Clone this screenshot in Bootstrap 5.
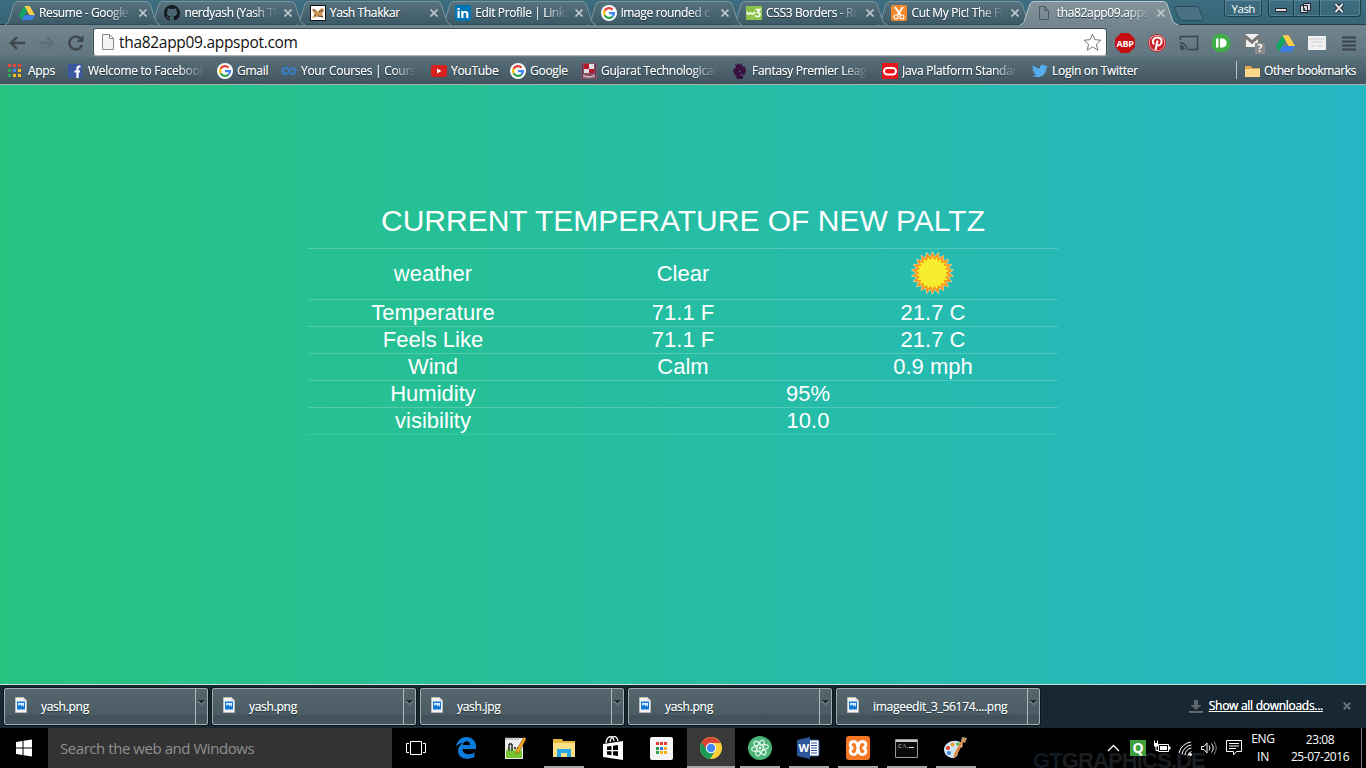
<!DOCTYPE html>
<html lang="en">
<head>
<meta charset="utf-8">
<title>tha82app09.appspot.com</title>
<link href="https://cdn.jsdelivr.net/npm/bootstrap@5.3.0/dist/css/bootstrap.min.css" rel="stylesheet">
<style>
html,body{height:768px;overflow:hidden}
body{width:1366px;font-family:"Open Sans","Noto Sans",sans-serif;font-size:12px;line-height:16px;color:#fff;letter-spacing:-.28px;background:#000}
svg{display:block;flex:none}
/* tab strip */
.strip{height:25px;background:linear-gradient(#3d6d80,#376578);border-bottom:1px solid #1d3f4d}
.tabs{padding-left:7px;height:25px}
.btab{width:153px;height:25px;margin-right:-7.6px;padding-left:12px;gap:4px}
.btab .shape{position:absolute;left:-2px;top:0;z-index:-1}
.btab .shape.on{left:-5px}
.btab .label{width:96px;padding-top:1px;letter-spacing:-.36px}
.btab .x{margin-left:-1px}
.fade-end{overflow:hidden;white-space:nowrap;-webkit-mask-image:linear-gradient(90deg,#000 calc(100% - 26px),transparent);mask-image:linear-gradient(90deg,#000 calc(100% - 26px),transparent)}
.label.fade-end{-webkit-mask-image:linear-gradient(90deg,#000 68px,transparent 93px);mask-image:linear-gradient(90deg,#000 68px,transparent 93px)}
.label,.bm span{text-shadow:0 1px 1px #1c3039,0 0 .6px #fff}
.newtab{margin:6px 0 0 3px}
.user{width:38px;height:17px;margin-left:19px;border:1px solid #1e4252;border-top:0;border-radius:0 0 4px 4px;box-shadow:inset 0 0 0 1px #5b8494;font-size:11.5px;line-height:17px;letter-spacing:-.5px}
.winctl{width:93px;height:17px;margin-left:6px;border:1px solid #1b3c4a;border-top:0;border-radius:0 0 4px 4px;box-shadow:inset 0 0 0 1px #57808f}
/* toolbar */
.tools{height:32px;background:linear-gradient(#73868f,#5f757f)}
.addr{width:1014px;height:28px;margin-top:3px;border:1px solid #3d4d54;border-bottom-color:#a9b6bc;border-radius:3px;background:#fff;box-shadow:0 0 0 1px #84959c66;color:#111;font-size:15.5px;letter-spacing:-.3px}
.url{padding-left:5px}
.ext{display:grid;grid-template-columns:repeat(8,32px);width:257px;justify-items:center;align-items:center}
.bms{height:28px;padding-left:8px;background:linear-gradient(#596f79,#40555f);border-bottom:1px solid #b3aeaa;display:grid;grid-template-columns:60px 149px 64px 150px 79px 71px 151px 150px 150px 204px 1fr;position:relative}
.bm{display:flex;align-items:center;gap:4px;height:27px}
.bm .fade-end{width:116px}
.bm .oth{letter-spacing:-.45px;margin-left:-1px}
/* page */
.page{height:599px;background:linear-gradient(90deg,#26c481,#25b7c4);font-family:"Liberation Sans",Arial,sans-serif;letter-spacing:0;padding-top:109px}
.wx{width:750px;margin:0 auto;color:#fff;font-size:22px;line-height:26px;text-align:center;border-collapse:collapse;table-layout:fixed}
.wx td,.wx th{padding:0;border-bottom:1px solid rgba(255,255,255,.2);font-weight:400;vertical-align:middle}
.wx th{font-size:30px;height:54px}
.wx tr:last-child td{border-color:rgba(255,255,255,.12)}
/* downloads */
.shelf{height:44px;background:#182832;border-top:1px solid #d4dcd6;padding:3px 0 0 4px;gap:4px}
.dl{width:204px;height:37px;border:1px solid #a3adb1;border-radius:2px;background:linear-gradient(#56666e,#4a5b63 75%,#3f5058 76%,#46575f);padding-left:10px;box-shadow:0 0 0 1px #0c181e;text-shadow:0 1px 1px #1c3039,0 0 .6px #fff}
.dl .arrow{width:12px;height:35px;border-left:1px solid #b0b9bd;padding:11px 0 0 2px}
.name{margin:10px 0 0 14px}
.showall{margin-right:15px}
.showall .all{margin:0 20px 0 6px;text-shadow:0 0 .6px #fff}
/* taskbar */
.taskbar{height:40px;background:#000}
.search{width:344px;height:40px;background:#333;color:#8f8f8f;font-size:15px;padding-left:12px;letter-spacing:-.45px}
.apps{display:grid;grid-template-columns:repeat(11,49px);margin-left:9px}
.app{height:40px;position:relative;display:flex;align-items:center;justify-content:center}
.app.run::after{content:"";position:absolute;left:5px;right:4px;bottom:0;height:2px;background:#aaa6a0}
.app.cur{background:#393939;margin:0 0 0 1px}
.app.cur::after{left:0;right:0}
.mark-bg{position:absolute;left:1033px;top:21px;height:19px;overflow:hidden;font:bold 22px/24px "Liberation Sans",sans-serif;color:#1b1e20;letter-spacing:-.9px}
.mark-bg span{color:#101b25}
.tray>*{flex:none;position:relative}
.lang{width:26px;line-height:18px;margin-left:-1px}
.clock{width:60px;margin-left:14px;line-height:17px;letter-spacing:-.45px}
.peek{width:5px;height:40px;margin-left:11px;border-left:1px solid #777}
</style>
</head>
<body>
<svg width="0" height="0" class="position-absolute">
<defs>
<linearGradient id="tg" x1="0" y1="0" x2="0" y2="1"><stop offset="0" stop-color="#587380"/><stop offset="1" stop-color="#3c5966"/></linearGradient>
<linearGradient id="ta" x1="0" y1="0" x2="0" y2="1"><stop offset="0" stop-color="#84939b"/><stop offset="1" stop-color="#73868f"/></linearGradient>
<symbol id="tab" viewBox="0 0 156 25"><path d="M0 24.5C3 24 3.500 22 4.500 19L9 4Q10 1.500 13 1.500H141Q144 1.500 145 4L150 19C151 22 152 24 155 24.500" fill="url(#tg)" stroke="#7d939c"/></symbol>
<symbol id="tabon" viewBox="0 0 159 25"><path d="M-1 25C4 24 4 22 5 19L10 4Q11 1.500 14 1.500H143Q146 1.500 147 4L152 19C153 22 154 24 159 25" fill="url(#ta)" stroke="#bcc6ca"/></symbol>
<symbol id="x" viewBox="0 0 10 10"><path d="M1.500 1.500l7 7m0-7l-7 7" stroke="#c3ccd0" stroke-width="1.700"/></symbol>
<symbol id="goog" viewBox="0 0 16 16"><circle cx="8" cy="8" r="8" fill="#fff"/><g fill="none" stroke-width="2.300"><path d="M11.600 4.600A5 5 0 0 0 3.600 5.800" stroke="#ea4335"/><path d="M3.600 5.800a5 5 0 0 0 0 4.400" stroke="#fbbc05"/><path d="M3.600 10.200a5 5 0 0 0 7.800 1.500" stroke="#34a853"/><path d="M11.400 11.700A4.800 4.800 0 0 0 13 8.100H8" stroke="#4285f4"/></g></symbol>
<symbol id="drive" viewBox="0 0 16 14"><path d="M5.300 0h5.400L16 9.200h-5.400z" fill="#ffcf48"/><path d="M5.300 0L0 9.200 2.700 14 8 4.700z" fill="#11a661"/><path d="M5.400 9.200H16L13.300 14H2.700z" fill="#3c7fe8"/></symbol>
<symbol id="img" viewBox="0 0 12 16"><path d="M.5.5h8l3 3v12H.5z" fill="#f4f4f4" stroke="#bbb"/><path d="M8.500.5v3h3" fill="#ccc"/><path d="M2 4.500h8v8H2z" fill="#0a78d4"/><path d="M3 6h6v4L7.500 8 6.500 9.500 5 7.500 3 9z" fill="#d5ecff"/></symbol>
<symbol id="dn" viewBox="0 0 7 5"><path d="M0 0h7L3.500 4z" fill="#222b30"/><path d="M.5 1.500l3 3 3-3" fill="none" stroke="#9aa5aa"/></symbol>
</defs></svg>

<header>
<div class="strip d-flex">
 <div class="tabs d-flex">
  <div class="btab d-flex align-items-center position-relative" style="z-index:8"><svg class="shape" width="156" height="25"><use href="#tab"/></svg><svg width="16" height="14"><use href="#drive"/></svg><span class="label fade-end">Resume - Google</span><svg class="x" width="10" height="10"><use href="#x"/></svg></div>
  <div class="btab d-flex align-items-center position-relative" style="z-index:7"><svg class="shape" width="156" height="25"><use href="#tab"/></svg><svg width="16" height="16" viewBox="0 0 16 16"><path d="M8 0C3.600 0 0 3.600 0 8c0 3.500 2.300 6.500 5.500 7.600.4.100.5-.2.5-.4v-1.500c-2.200.5-2.700-.9-2.700-.9-.4-.9-.9-1.200-.9-1.200-.7-.5.1-.5.1-.5.8.1 1.200.8 1.200.8.7 1.200 1.900.9 2.300.7.1-.5.3-.9.5-1.100-1.800-.2-3.600-.9-3.600-4 0-.9.3-1.600.8-2.100-.1-.2-.4-1 .1-2.100 0 0 .7-.2 2.200.8a7.700 7.700 0 0 1 4 0c1.500-1 2.200-.8 2.200-.8.4 1.100.2 1.900.1 2.100.5.6.8 1.300.8 2.100 0 3.100-1.900 3.700-3.700 3.900.3.300.6.800.6 1.500v2.300c0 .2.100.5.500.4A8 8 0 0 0 8 0z" fill="#15191c"/></svg><span class="label fade-end">nerdyash (Yash Th</span><svg class="x" width="10" height="10"><use href="#x"/></svg></div>
  <div class="btab d-flex align-items-center position-relative" style="z-index:6"><svg class="shape" width="156" height="25"><use href="#tab"/></svg><svg width="16" height="16"><path d="M.5.500h15v15H.5z" fill="#fff" stroke="#111"/><path d="M2 4l4 1 2 2 2-3 3-1 1 3-2 3 2 4-4-2-4 1-4 1 3-4-2-2z" fill="#c99550"/><path d="M3 4l3 2M8 11l5 1M9 7l4-2M4 9l2 2" stroke="#5d4830"/></svg><span class="label">Yash Thakkar</span><svg class="x" width="10" height="10"><use href="#x"/></svg></div>
  <div class="btab d-flex align-items-center position-relative" style="z-index:5"><svg class="shape" width="156" height="25"><use href="#tab"/></svg><svg width="16" height="16"><rect width="16" height="16" rx="1.500" fill="#0077b5"/><path d="M2.500 6h2.200v7H2.500zM2.500 3h2.200v2H2.500zM6.300 6h2.100v1c1-1.700 5-1.600 5 1.800V13h-2.200V9.300c0-2-2.700-1.800-2.700 0V13H6.300z" fill="#fff"/></svg><span class="label fade-end">Edit Profile | Linke</span><svg class="x" width="10" height="10"><use href="#x"/></svg></div>
  <div class="btab d-flex align-items-center position-relative" style="z-index:4"><svg class="shape" width="156" height="25"><use href="#tab"/></svg><svg width="16" height="16"><use href="#goog"/></svg><span class="label fade-end">image rounded c</span><svg class="x" width="10" height="10"><use href="#x"/></svg></div>
  <div class="btab d-flex align-items-center position-relative" style="z-index:3"><svg class="shape" width="156" height="25"><use href="#tab"/></svg><svg width="16" height="16"><rect y="1" width="16" height="14" fill="#8bc34a"/><path d="M1 6.500c0 3.500 3 3.500 3.500.5C5 10 8.500 9.500 8.500 6.500" fill="none" stroke="#fff" stroke-width="1.500"/><path d="M9.500 4.500h4.500l-2.500 3c4 0 3 4.500-.5 4-1 0-1.500-.5-2-1" fill="none" stroke="#fff" stroke-width="1.600"/></svg><span class="label fade-end">CSS3 Borders - Ro</span><svg class="x" width="10" height="10"><use href="#x"/></svg></div>
  <div class="btab d-flex align-items-center position-relative" style="z-index:2"><svg class="shape" width="156" height="25"><use href="#tab"/></svg><svg width="16" height="16"><rect width="16" height="16" rx="2" fill="#f0892b"/><path d="M4 2l5.500 8M12 2L6.500 10" stroke="#fff" stroke-width="1.800"/><g fill="none" stroke="#fff" stroke-width="1.200"><circle cx="5" cy="12" r="2"/><circle cx="11" cy="12" r="2"/></g></svg><span class="label fade-end">Cut My Pic! The Fr</span><svg class="x" width="10" height="10"><use href="#x"/></svg></div>
  <div class="btab d-flex align-items-center position-relative" style="z-index:9"><svg class="shape on" width="159" height="25"><use href="#tabon"/></svg><svg width="16" height="16"><path d="M2.500 1.500h5l4 4v9h-9zM7.500 1.500v4h4" fill="none" stroke="#4d585e"/></svg><span class="label fade-end">tha82app09.apps</span><svg class="x" width="10" height="10"><use href="#x"/></svg></div>
 </div>
 <svg class="newtab" width="32" height="15"><path d="M1.500 2Q1.500.5 3 .5H23q2 0 3 2l4 10q.5 2-1 2H9q-2 0-3-2z" fill="#4b7282" stroke="#274d5d"/></svg>
 <div class="user text-center">Yash</div>
 <svg class="winctl" viewBox="0 0 91 16" width="93" height="17"><path d="M24.500 0v16M50.500 0v16" stroke="#1b3c4a"/><path d="M25.500 0v15M51.500 0v15" stroke="#57808f"/><path d="M6.500 8.500h11v3h-11z" fill="#ddd" stroke="#223"/><path d="M34.500 3.500h7v7h-7zM31.500 5.500h7v7h-7z" fill="#ddd" stroke="#223"/><path d="M34 8h2v2h-2z" fill="#345"/><path d="M66.500 4l7 8m0-8l-7 8" stroke="#223" stroke-width="4"/><path d="M66.500 4l7 8m0-8l-7 8" stroke="#ddd" stroke-width="2"/></svg>
</div>
<div class="tools d-flex">
 <svg width="93" height="34" viewBox="0 0 93 34"><g fill="none" stroke-width="2.400"><path d="M25 18H11m6-6l-6 6 6 6" stroke="#3f484d"/><path d="M39 18h14m-6-6l6 6-6 6" stroke="#5d6e76"/><path d="M81 14a6.500 6.500 0 1 0 1 6" stroke="#3f484d"/></g><path d="M83.500 10v7h-7z" fill="#3f484d"/></svg>
 <div class="addr d-flex align-items-center"><svg class="ms-2" width="12" height="16"><path d="M.5.500h7l4 4v11H.5zM7.500.500v4h4" fill="#f4f4f4" stroke="#888"/></svg><span class="url">tha82app09.appspot.com</span><svg class="ms-auto me-1" width="19" height="19"><path d="M9.500 1l2.400 5.700 6 .5-4.500 4 1.400 6-5.300-3.200-5.300 3.200 1.400-6-4.500-4 6-.5z" fill="#fff" stroke="#777"/></svg></div>
 <div class="ext ms-auto pt-1">
  <svg width="20" height="20"><path d="M6 0h8l6 6v8l-6 6H6l-6-6V6z" fill="#c70d12"/><text x="1.500" y="13.500" fill="#fff" font-size="9" font-weight="700" textLength="17">ABP</text></svg>
  <svg width="18" height="18"><circle cx="9" cy="9" r="9" fill="#cb2027"/><circle cx="9" cy="9" r="8" fill="#eee"/><circle cx="9" cy="9" r="7.500" fill="#cb2027"/><path d="M6 10.500C3 6 6.500 3.500 9.500 3.500c4 0 5 4 3.300 6.500-1.500 2-4 1.700-4.300.5M9.500 6.500L7.500 16" fill="none" stroke="#fff" stroke-width="2"/></svg>
  <svg width="20" height="18"><path d="M1.500 6V2.500h17v13H9" fill="none" stroke="#39454b" stroke-width="1.500"/><path d="M1 8.500a8 8 0 0 1 7 7M1 11.500a5 5 0 0 1 4 4M1 14h2v2" fill="none" stroke="#39454b" stroke-width="1.500"/></svg>
  <svg width="20" height="20"><circle cx="10" cy="10" r="9.500" fill="#3fae49"/><path d="M5 5.500h2.500v9H5zM9 5.500h2.500c5.500 0 5.500 9 0 9H9z" fill="#fff"/></svg>
  <svg width="24" height="22"><path d="M2 2h18v13H2z" fill="#eee"/><path d="M2 15V2h2l7 6 7-6h2v13h-3V7l-6 5-6-5v8z" fill="#777"/><rect x="14" y="11" width="10" height="11" fill="#8b8b8b"/><text x="16.500" y="20" fill="#fff" font-size="10" font-weight="700">?</text></svg>
  <svg width="19" height="17"><use href="#drive"/></svg>
  <svg width="18" height="14"><path d="M0 0h18v14H0z" fill="#f1f1f1"/><path d="M1 3h16M3 6h12M3 10h4m2 0h5" stroke="#ccc"/></svg>
  <svg width="14" height="16"><path d="M0 2.500h14M0 6.500h14M0 10.500h14M0 14.500h14" stroke="#39444a" stroke-width="2"/></svg>
 </div>
</div>
<nav class="bms">
 <div class="bm"><svg width="16" height="16"><path d="M0 1h3v3H0zM5 1h3v3H5zM10 1h3v3h-3z" fill="#e8453c"/><path d="M0 6h3v3H0zM0 11h3v3H0z" fill="#2fab54"/><path d="M5 6h3v3H5z" fill="#4a8af4"/><path d="M10 6h3v3h-3zM10 11h3v3h-3zM5 11h3v3H5z" fill="#f9bd15"/></svg><span>Apps</span></div>
 <div class="bm"><svg width="16" height="16"><path d="M0 1h14v14H0z" fill="#3b57a0"/><path d="M12.500 3.500h-1.200c-1.200 0-1.800.6-1.800 1.800V15M6.500 8.500h5.500" fill="none" stroke="#fff" stroke-width="2.200"/></svg><span class="fade-end">Welcome to Facebook</span></div>
 <div class="bm"><svg width="16" height="16"><use href="#goog"/></svg><span>Gmail</span></div>
 <div class="bm"><svg width="16" height="16"><path d="M7.500 6C5 4 1.500 5 1.500 8s3.500 4 6 1.500L9 7c2-2.500 5.500-2 5.500 1S11.500 11.500 9.500 10" fill="none" stroke="#3b7dc0" stroke-width="2.400"/></svg><span class="fade-end">Your Courses | Course</span></div>
 <div class="bm"><svg width="16" height="16"><rect y="2" width="16" height="12" rx="2.500" fill="#d8201f"/><path d="M6 5.500v5L10.500 8z" fill="#fff"/></svg><span>YouTube</span></div>
 <div class="bm"><svg width="16" height="16"><use href="#goog"/></svg><span>Google</span></div>
 <div class="bm"><svg width="16" height="16"><path d="M0 0h16v16H0z" fill="#884e5c"/><path d="M3 1h10v9H3z" fill="#ddd"/><path d="M3 1h5v5H3zM8 6h5v4H8z" fill="#b5172b"/><path d="M1 12q7 4 14 0" fill="none" stroke="#ccb8c4" stroke-width="1.500"/><path d="M1.500 1v13M14.500 1v13" fill="none" stroke="#4b3a68"/></svg><span class="fade-end">Gujarat Technological</span></div>
 <div class="bm"><svg width="16" height="16"><path d="M4 4l-1-3 2 1 1-2 2 2 2-2v3l3 1 1 4-1 3-2 1v4H5l-1-3-2-2-1-4z" fill="#37113f"/><path d="M7 8l2 1M8 12l3 0" stroke="#695470"/></svg><span class="fade-end">Fantasy Premier League</span></div>
 <div class="bm"><svg width="16" height="16"><path d="M0 0h16v16H0z" fill="#e8151d"/><rect x="2" y="5" width="12" height="6.500" rx="3.200" fill="none" stroke="#fff" stroke-width="2"/></svg><span class="fade-end">Java Platform Standard</span></div>
 <div class="bm"><svg width="16" height="16"><path d="M16 3.500l-1.600 1.600C14.500 11 9 16.500 0 13c2 0 3.500-.4 4.700-1.400-1.500 0-2.600-1-3-2.300h1.400C1.500 8.800.500 7.400.500 6L2 6.300C.5 5.200.200 3.500 1.100 1.900 3 4 5 5.200 7.900 5.400 7.300 1.500 11 .8 13.300 2.900L15.500 2l-1.200 1.700z" fill="#55acee"/></svg><span>Login on Twitter</span><svg class="ms-auto me-3" width="9" height="8"><path d="M1 1l3 3-3 3M5 1l3 3-3 3" fill="none" stroke="#5a5f62"/></svg></div>
 <div class="bm"><svg width="4" height="24"><path d="M.5 2v18" stroke="#b8c2c6"/></svg><svg width="17" height="16"><path d="M1 3h6l1 2h8v9H1z" fill="#e3a94f"/><path d="M1 6h15v8H1z" fill="#fbd68d"/></svg><span class="oth text-nowrap">Other bookmarks</span></div>
</nav>
</header>

<main class="page">
<table class="wx">
<thead><tr><th colspan="3">CURRENT TEMPERATURE OF NEW PALTZ</th></tr></thead>
<tbody>
<tr style="height:51px"><td>weather</td><td>Clear</td><td><svg class="mx-auto" id="sun" width="44" height="46" viewBox="-21.500 -22 44 46"><polygon fill="#fff3d0"/><polygon fill="#f7941d"/><polygon fill="#f8ee30"/></svg></td></tr>
<tr><td>Temperature</td><td>71.1 F</td><td>21.7 C</td></tr>
<tr><td>Feels Like</td><td>71.1 F</td><td>21.7 C</td></tr>
<tr><td>Wind</td><td>Calm</td><td>0.9 mph</td></tr>
<tr><td>Humidity</td><td colspan="2">95%</td></tr>
<tr><td>visibility</td><td colspan="2">10.0</td></tr>
</tbody></table>
</main>

<section class="shelf d-flex">
 <div class="dl d-flex"><svg class="mt-2" width="12" height="16"><use href="#img"/></svg><span class="name">yash.png</span><div class="arrow ms-auto"><svg width="7" height="5"><use href="#dn"/></svg></div></div>
 <div class="dl d-flex"><svg class="mt-2" width="12" height="16"><use href="#img"/></svg><span class="name">yash.png</span><div class="arrow ms-auto"><svg width="7" height="5"><use href="#dn"/></svg></div></div>
 <div class="dl d-flex"><svg class="mt-2" width="12" height="16"><use href="#img"/></svg><span class="name">yash.jpg</span><div class="arrow ms-auto"><svg width="7" height="5"><use href="#dn"/></svg></div></div>
 <div class="dl d-flex"><svg class="mt-2" width="12" height="16"><use href="#img"/></svg><span class="name">yash.png</span><div class="arrow ms-auto"><svg width="7" height="5"><use href="#dn"/></svg></div></div>
 <div class="dl d-flex"><svg class="mt-2" width="12" height="16"><use href="#img"/></svg><span class="name">imageedit_3_56174....png</span><div class="arrow ms-auto"><svg width="7" height="5"><use href="#dn"/></svg></div></div>
 <div class="d-flex align-items-center ms-auto pb-1 showall"><svg width="14" height="13"><path d="M5 0h4v5h3.500L7 10 1.500 5H5zM0 11h14v2H0z" fill="#5f666a"/></svg><span class="text-decoration-underline all">Show all downloads...</span><svg width="8" height="8" viewBox="0 0 10 10"><path d="M1 1l8 8m0-8l-8 8" stroke="#687379" stroke-width="2.500"/></svg></div>
</section>

<footer class="taskbar d-flex align-items-center position-relative">
 <div class="mark-bg" aria-hidden="true"><span>GT</span>GRAPHICS.DE</div>
 <svg width="48" height="40"><path d="M16 14l6.500-1v6.500H16zM23.500 12.800L32 11.500v8h-8.500zM16 20.500h6.500V27L16 26zM23.500 20.500H32v8l-8.500-1.200z" fill="#fff"/></svg>
 <div class="search d-flex align-items-center">Search the web and Windows</div>
 <svg width="40" height="40"><path d="M18.500 13.500h11v13h-11zM17 15.500h-2.500v9H17M31 15.500h2.500v9H31" fill="none" stroke="#fff"/></svg>
 <div class="apps">
  <div class="app"><svg width="20" height="22"><path d="M0 10C1 3 6 0 10 0c6 0 10 4 10 9v3H6.500c.5 6 7.500 6.500 12 3.500V20C10 24 2 21 2 14c0-4 2-6 5-8C4 6 1.500 7.500 0 10zm7-2h7c0-5-6.500-5-7 0z" fill="#0b7bda"/></svg></div>
  <div class="app"><svg width="22" height="24"><path d="M1 2h18v21H1z" fill="#eee"/><path d="M2 14h16v8H2z" fill="#72c430"/><path d="M2 12h16v3H2z" fill="#bfe39a"/><path d="M2 1v3m3-3v3m3-3v3m3-3v3m3-3v3" stroke="#888"/><path d="M5 8v7m3-7v7M5 8h3m2 4h2m1 0h2" fill="none" stroke="#222" stroke-width="1.400"/><path d="M20 1l2 2-7 13-3 2v-3z" fill="#f2ae23" stroke="#8b5610" stroke-width=".7"/></svg></div>
  <div class="app run"><svg width="22" height="19"><path d="M0 0h9l1 2h12v16H0z" fill="#e8b93f"/><path d="M0 4h22v14H0z" fill="#fbdf86"/><path d="M4 18v-8h14v8h-4v-4H8v4z" fill="#29a9e8"/></svg></div>
  <div class="app"><svg width="22" height="25"><path d="M1 8l20-3v19L1 21z" fill="#fff"/><path d="M4 7c1-8 7-8 8-2M8 6c1-7 7-7 8-1" fill="none" stroke="#fff" stroke-width="1.300"/><path d="M5 10.500l4.500-.6V14H5zM11 9.700l5-.7v5h-5zM5 15.200h4.500v4L5 18.500zM11 15.200h5V20l-5-.7z" fill="#000"/></svg></div>
  <div class="app"><svg width="23" height="23"><rect width="23" height="23" rx="2" fill="#f5f5f5"/><path d="M6 5h3v3H6zM10 5h3v3h-3zM14 5h3v3h-3z" fill="#e63c32"/><path d="M6 10h3v3H6zM6 14h3v3H6z" fill="#27a050"/><path d="M10 10h3v3h-3z" fill="#3478dc"/><path d="M14 10h3v3h-3zM14 14h3v3h-3zM10 14h3v3h-3z" fill="#f5b31a"/></svg></div>
  <div class="app run cur"><svg width="22" height="22"><circle cx="11" cy="11" r="11" fill="#fdd03b"/><path d="M1.500 5.500A11 11 0 0 0 10 22l5.500-8.500L11 14z" fill="#179c58"/><path d="M1.500 5.500A11 11 0 0 1 20.500 6H11L7 13z" fill="#dc4437"/><circle cx="11" cy="11" r="5.200" fill="#fff"/><circle cx="11" cy="11" r="4.200" fill="#4486f4"/></svg></div>
  <div class="app run"><svg width="24" height="24"><circle cx="12" cy="12" r="12" fill="#4bb377"/><g fill="none" stroke="#e7f6ed"><ellipse cx="12" cy="12" rx="3" ry="8.500" transform="rotate(20 12 12)"/><ellipse cx="12" cy="12" rx="3" ry="8.500" transform="rotate(80 12 12)"/><ellipse cx="12" cy="12" rx="3" ry="8.500" transform="rotate(-40 12 12)"/></g><circle cx="12" cy="12" r="1.200" fill="#fff"/></svg></div>
  <div class="app run"><svg width="23" height="22"><path d="M12 3h10v16H12z" fill="#fff" stroke="#2b579a"/><path d="M14 6h6m-6 2.500h6M14 11h6m-6 2.500h6M14 16h6" stroke="#2b579a"/><path d="M0 3l13-3v22L0 19z" fill="#2b579a"/><text x="1.500" y="15" fill="#fff" font-size="11" font-weight="700" textLength="10">W</text></svg></div>
  <div class="app run"><svg width="24" height="24"><rect width="24" height="24" rx="3" fill="#f37623"/><path d="M8 5.500c-5 0-5 6.500-.5 6.500C3 12 3 18.500 8 18.500c4 0 3.500-6.500 4-6.500s0 6.500 4 6.500c5 0 5-6.500.5-6.500 4.500 0 4.500-6.500-.5-6.500-4 0-3.500 6.500-4 6.500s0-6.500-4-6.500z" fill="none" stroke="#fff" stroke-width="2.800"/></svg></div>
  <div class="app run"><svg width="23" height="19"><path d="M.5.500h22v18H.5z" fill="#0b0b0b" stroke="#999"/><path d="M1 2h21" stroke="#ccc" stroke-width="2"/><text x="3" y="9" fill="#ddd" font-size="6" textLength="10">C:\.</text><path d="M14 8.500h5" stroke="#ddd"/></svg></div>
  <div class="app run"><svg width="25" height="24"><path d="M1 13C2 6 11 3 17 6c4 2 3 6 0 6-3 1-1 5-3 8-2 2-5 3-8 1-4-2-5-5-5-8z" fill="#cfe6f3"/><circle cx="5" cy="12" r="2" fill="#e63a2e"/><circle cx="9.500" cy="8.500" r="2" fill="#f29a27"/><circle cx="15" cy="8" r="1.800" fill="#56b043"/><circle cx="6" cy="17" r="2" fill="#3d84dc"/><path d="M21 5l-7 14-4 4 1-5 8-14z" fill="#e2863c"/><path d="M18 5l1-4 5 1-2 5z" fill="#c79a6b"/></svg></div>
 </div>
 <div class="tray d-flex align-items-center ms-auto">
  <svg width="24" height="40"><path d="M6 23l5.500-5.500L17 23" fill="none" stroke="#fff" stroke-width="1.400"/></svg>
  <svg width="24" height="40"><path d="M4 12h16v16H4z" fill="#3f9f3c"/><text x="6.500" y="25" fill="#fff" font-size="14" font-weight="700">Q</text></svg>
  <svg width="24" height="40"><path d="M8.500 16.500h10v7h-10z" fill="none" stroke="#fff"/><path d="M10 18h7v4h-7zM19 18.500h1.500v3H19zM4 15h4v3q-2 2-4 0z" fill="#fff"/><path d="M4.500 12.500v3m3-3v3M6 18v4.500h3" fill="none" stroke="#fff"/></svg>
  <svg width="24" height="40"><g fill="none" stroke="#fff"><path d="M5 25A14 14 0 0 1 17 14M8 26a11 11 0 0 1 9.500-9M11 27a8 8 0 0 1 6.500-7M14 27.500a5 5 0 0 1 3.500-4"/></g><circle cx="16.500" cy="26.500" r="1.500" fill="#fff"/></svg>
  <svg width="22" height="40"><path d="M3.500 18.500H6l3-3.500v10l-3-3.500H3.500zM11 17.500q2 2.500 0 5M13.500 15.500q3.500 4.500 0 9" fill="none" stroke="#fff"/><path d="M16 13.500q4.500 6.500 0 13" fill="none" stroke="#888"/></svg>
  <svg width="31" height="40"><path d="M6.500 12.500h15v11h-5l-3 3.500v-3.500h-7zM9 15.500h10M9 18h10M9 20.500h7" fill="none" stroke="#fff"/></svg>
  <div class="text-center lang">ENG<br>IN</div>
  <div class="text-center clock">23:08<br>25-07-2016</div>
  <div class="peek"></div>
 </div>
</footer>
<script src="https://cdn.jsdelivr.net/npm/bootstrap@5.3.0/dist/js/bootstrap.bundle.min.js"></script>
<script>
// Sun rays: alternating outer and inner radii around the disc
const star=(n,a,b)=>Array.from({length:n*2},(_,i)=>{const r=i%2?b:a,t=Math.PI*i/n;return (r*Math.sin(t)).toFixed(2)+','+(-r*Math.cos(t)).toFixed(2)}).join(' ');
const p=document.querySelectorAll('#sun polygon');
p[0].setAttribute('points',star(22,21.8,17));
p[1].setAttribute('points',star(22,21,16.2));
p[2].setAttribute('points',star(22,16.8,13.2));
</script>
</body>
</html>
